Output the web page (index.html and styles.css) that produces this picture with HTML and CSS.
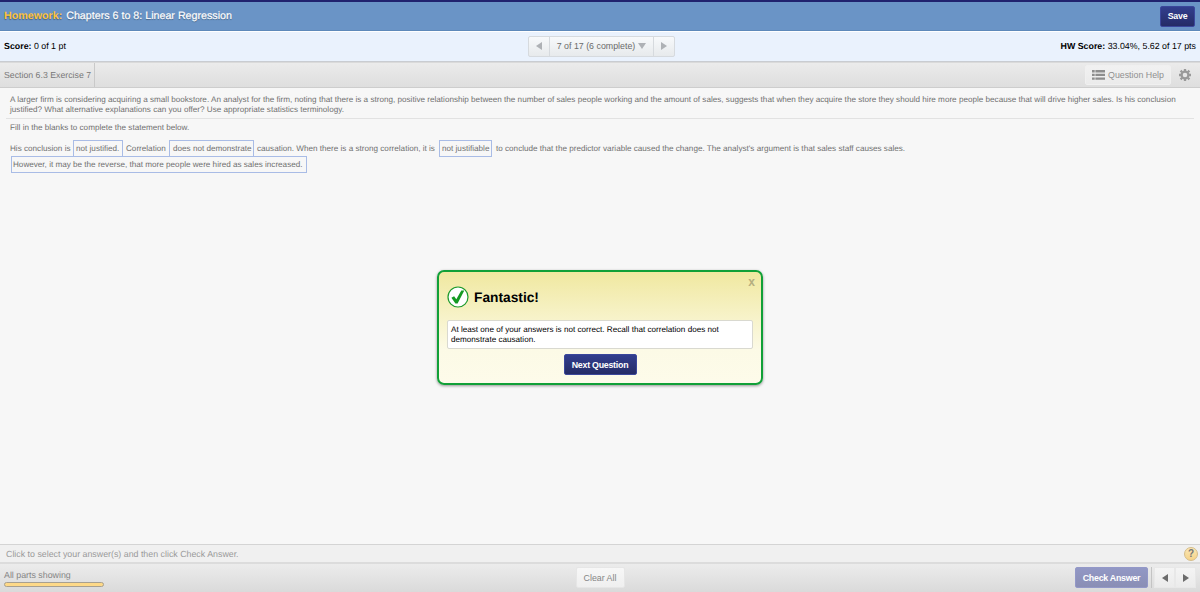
FILE: index.html
```
<!DOCTYPE html>
<html lang="en">
<head>
  <meta charset="UTF-8" />
  <title>Homework: Chapters 6 to 8: Linear Regression</title>
  <link rel="stylesheet" href="styles.css">
</head>
<body>
  <header class="title-bar">
    <h1><span class="label">Homework:</span> <span class="name">Chapters 6 to 8: Linear Regression</span></h1>
    <button class="btn-primary save">Save</button>
  </header>

  <div class="score-bar">
    <p><b>Score:</b> 0 of 1 pt</p>
    <div class="pager">
      <button class="prev"><svg width="6" height="8" viewBox="0 0 6 8"><path d="M6 0v8L0 4z"/></svg></button>
      <button class="current"><span>7 of 17 (6 complete)</span><svg width="8" height="6" viewBox="0 0 8 6"><path d="M0 0h8L4 6z"/></svg></button>
      <button class="next"><svg width="6" height="8" viewBox="0 0 6 8"><path d="M0 0v8l6-4z"/></svg></button>
    </div>
    <p class="hw-score"><b>HW Score:</b> 33.04%, 5.62 of 17 pts</p>
  </div>

  <div class="section-bar">
    <span class="section-name">Section 6.3 Exercise 7</span>
    <div class="tools">
      <button class="help">
        <svg width="13" height="10" viewBox="0 0 13 10"><path d="M0 0h2.7v2.4H0zM3.4 0H13v2.4H3.4zM0 3.7h2.7v2.4H0zM3.4 3.7H13v2.4H3.4zM0 7.4h2.7v2.4H0zM3.4 7.4H13v2.4H3.4z"/></svg>
        <span>Question Help</span>
      </button>
      <svg class="gear" width="12" height="12" viewBox="-6 -6 12 12">
        <circle r="3.4" fill="none" stroke="#999" stroke-width="2.2"/>
        <g stroke="#999" stroke-width="2.3">
          <path d="M0-6v2.2M0 6V3.8M-6 0h2.2M6 0H3.8"/>
          <path d="M-4.4-4.4l1.6 1.6M4.4-4.4L2.8-2.8M-4.4 4.4l1.6-1.6M4.4 4.4L2.8 2.8"/>
        </g>
      </svg>
    </div>
  </div>

  <main class="question">
    <p class="prompt">A larger firm is considering acquiring a small bookstore. An analyst for the firm, noting that there is a strong, positive relationship between the number of sales people working and the amount of sales, suggests that when they acquire the store they should hire more people because that will drive higher sales. Is his conclusion<br>justified? What alternative explanations can you offer? Use appropriate statistics terminology.</p>
    <p class="fill">Fill in the blanks to complete the statement below.</p>
    <div class="statement">
      <span class="t1">His conclusion is</span>
      <span class="blank b1">not justified.</span>
      <span class="t2">Correlation</span>
      <span class="blank b2">does not demonstrate</span>
      <span class="t3">causation. When there is a strong correlation, it is</span>
      <span class="blank b3">not justifiable</span>
      <span class="t4">to conclude that the predictor variable caused the change. The analyst's argument is that sales staff causes sales.</span>
    </div>
    <div class="statement">
      <span class="blank b4">However, it may be the reverse, that more people were hired as sales increased.</span>
    </div>
  </main>

  <div class="hint-bar">
    <span>Click to select your answer(s) and then click Check Answer.</span>
    <button class="round-help">?</button>
  </div>

  <footer class="action-bar">
    <div class="progress">
      <span>All parts showing</span>
      <div class="bar"></div>
    </div>
    <button class="clear">Clear All</button>
    <div class="actions">
      <button class="btn-primary check">Check Answer</button>
      <div class="steps">
        <button><svg width="6" height="8" viewBox="0 0 6 8"><path d="M6 0v8L0 4z"/></svg></button>
        <button><svg width="6" height="8" viewBox="0 0 6 8"><path d="M0 0v8l6-4z"/></svg></button>
      </div>
    </div>
  </footer>

  <div class="dialog">
    <button class="close">x</button>
    <div class="dialog-head">
      <svg width="22" height="22" viewBox="0 0 22 22">
        <circle cx="11" cy="11" r="10" fill="#fff" stroke="#1d9a2d" stroke-width="1.2"/>
        <path d="M4.4 11.8l2.7-1.6 2.2 3L14.3 4.6h3L10.6 17.5H8.4z" fill="#149a22"/>
      </svg>
      <h2>Fantastic!</h2>
    </div>
    <p class="message">At least one of your answers is not correct. Recall that correlation does not<br>demonstrate causation.</p>
    <button class="btn-primary next-question">Next Question</button>
  </div>
</body>
</html>
```
FILE: styles.css
```
* {
  box-sizing: border-box;
  margin: 0;
  padding: 0;
}

body {
  display: flex;
  flex-direction: column;
  height: 100vh;
  overflow: hidden;
  background: #f7f7f7;
  color: #000;
  font-family: "Liberation Sans", Arial, Helvetica, sans-serif;
  font-size: 8.83px;
  text-rendering: geometricPrecision;
  white-space: nowrap;
}

button {
  border: none;
  background: none;
  color: inherit;
  font: inherit;
  cursor: pointer;
}

svg {
  display: block;
}

.btn-primary {
  border: 1px solid #3b479b;
  border-radius: 2px;
  background: linear-gradient(#323e8e, #252c66);
  color: #fff;
  font-weight: bold;
  letter-spacing: -0.25px;
}

/* Top bars */
.title-bar {
  display: flex;
  justify-content: space-between;
  align-items: center;
  height: 31px;
  padding: 0 5px 0 4px;
  border-top: 2px solid #20226e;
  border-bottom: 1px solid #5e89ba;
  background: #6a94c6;
}

.title-bar h1 {
  display: flex;
  gap: 4px;
  color: #fff;
  font-size: 10.7px;
  font-weight: normal;
  text-shadow: 0 1px 1px rgba(0, 0, 0, 0.35);
}

.title-bar .label {
  color: #ffc33c;
  font-weight: bold;
}

.title-bar .name {
  -webkit-text-stroke: 0.2px #fff;
}

.save {
  width: 35px;
  height: 21px;
}

.score-bar {
  display: grid;
  grid-template-columns: 1fr auto 1fr;
  align-items: center;
  height: 31px;
  padding: 0 4px 1px;
  border-top: 1px solid #fff;
  border-bottom: 1px solid #c9ccd1;
  background: #eaf2fd;
}

.hw-score {
  text-align: right;
}

.pager {
  display: flex;
  height: 21px;
  margin-left: 3px;
  border: 1px solid #d6dade;
  border-radius: 2px;
  background: linear-gradient(#f7f9fb, #e7eaec);
  color: #6b6b6b;
}

.pager button {
  display: flex;
  justify-content: center;
  align-items: center;
  width: 20px;
}

.pager svg {
  fill: #aeb1b5;
}

.pager .current {
  gap: 3px;
  width: 105px;
  border-left: 1px solid #d6dade;
  border-right: 1px solid #d6dade;
}

.section-bar {
  display: flex;
  justify-content: space-between;
  height: 26px;
  border-top: 1px solid #dadada;
  border-bottom: 1px solid #cdcdcd;
  background: linear-gradient(#ebebeb, #dedede);
  color: #777;
}

.section-name {
  width: 95px;
  padding-left: 4px;
  border-right: 1px solid #c9c9c9;
  font-size: 8.75px;
  line-height: 24px;
}

.tools {
  display: flex;
  align-items: center;
  gap: 8px;
  padding-right: 9px;
}

.help {
  display: flex;
  justify-content: center;
  align-items: center;
  gap: 3px;
  width: 86px;
  height: 20px;
  border: 1px solid #f0f0f0;
  border-radius: 2px;
  background: linear-gradient(#f1f1f1, #ebebeb);
  color: #909090;
}

.help svg {
  fill: #8d8d8d;
}

/* Question */
.question {
  flex: 1;
  padding: 7px 6px 0;
  color: #707070;
  font-size: 8.145px;
  line-height: 10px;
}

.prompt {
  height: 24px;
  padding-left: 4px;
  border-bottom: 1px solid #e2e2e2;
}

.fill {
  margin: 4px 0 7px 4px;
}

.statement {
  display: flex;
  align-items: center;
  height: 17px;
  padding-left: 4px;
  line-height: 17px;
}

.statement + .statement {
  margin-top: -1px;
}

.blank {
  height: 17px;
  border: 1px solid #a9bce6;
  line-height: 16px;
}

.t1 { width: 63px; }
.t2 { width: 43px; }
.t3 { width: 182px; }

.b1 {
  width: 50px;
  margin-right: 3px;
  padding-left: 2px;
}

.b2 {
  width: 85px;
  margin-right: 3px;
  padding-left: 3px;
}

.b3 {
  width: 53px;
  margin-right: 4px;
  padding-left: 2px;
}

.b4 {
  width: 296px;
  margin-left: 1px;
  padding-left: 1px;
}

/* Bottom bars */
.hint-bar {
  display: flex;
  justify-content: space-between;
  align-items: center;
  height: 18px;
  padding: 0 2px 0 6px;
  border-top: 1px solid #d4d4d4;
  background: #f0f0f0;
  color: #9a9a9a;
}

.round-help {
  width: 14px;
  height: 14px;
  border: 1px solid #d6bd88;
  border-radius: 50%;
  background: linear-gradient(#fbe7b5, #f5d38a);
  color: #777;
  font-size: 10px;
  font-weight: bold;
  line-height: 12px;
}

.action-bar {
  display: grid;
  grid-template-columns: 1fr auto 1fr;
  height: 30px;
  padding: 3px 4px 0;
  border-top: 2px solid #dcdcdc;
  background: linear-gradient(#ececec, #dadada);
  color: #858585;
}

.progress {
  padding-top: 3px;
}

.bar {
  width: 100px;
  height: 5px;
  margin-top: 2px;
  border: 1px solid #a8a090;
  border-radius: 3px;
  background: #fed988;
}

.clear {
  width: 49px;
  height: 21px;
  border: 1px solid #e6e6e6;
  border-radius: 2px;
  background: linear-gradient(#f7f7f7, #efefef);
}

.actions {
  display: flex;
  justify-content: flex-end;
}

.check {
  width: 73px;
  height: 21px;
  margin-right: 3px;
  border-color: #9398c8;
  background: linear-gradient(#9298c5, #8a8eb5);
}

.steps {
  display: flex;
  height: 21px;
  padding-left: 2px;
  border-left: 1px solid #c4c4c4;
}

.steps button {
  display: flex;
  justify-content: center;
  align-items: center;
  width: 21px;
  border: 1px solid #e8e8e8;
  background: linear-gradient(#f4f4f4, #ebebeb);
  fill: #6b6b6b;
}

/* Feedback dialog, over the question */
.dialog {
  position: absolute;
  top: 270px;
  left: 437px;
  width: 326px;
  height: 115px;
  padding: 14px 8px 0;
  border: 2px solid #11a038;
  border-radius: 7px;
  background: linear-gradient(#f0e8a0, #fcfae6 70%, #fdfbea);
  box-shadow: 0 1px 3px rgba(0, 0, 0, 0.4);
}

.close {
  position: absolute;
  top: 3px;
  right: 6px;
  color: #b5ae80;
  font-size: 12px;
  font-weight: bold;
}

.dialog-head {
  display: flex;
  align-items: center;
  gap: 5px;
}

.dialog-head h2 {
  font-size: 13.75px;
}

.message {
  height: 29px;
  margin-top: 12px;
  padding: 4px 3px 0;
  border: 1px solid #d9d9d0;
  border-radius: 2px;
  background: #fff;
  font-size: 8.145px;
  line-height: 10px;
}

.next-question {
  display: block;
  width: 73px;
  height: 21px;
  margin: 5px auto 0;
}
```
